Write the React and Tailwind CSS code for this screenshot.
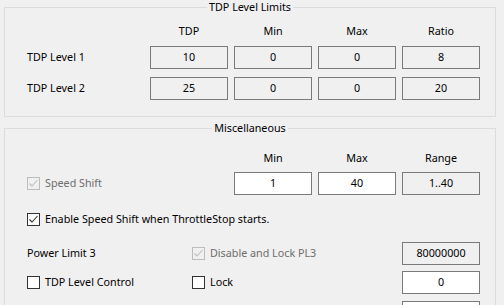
import React from "react";

const Check = ({ color }) => (
  <svg width="11" height="11" viewBox="0 0 11 11" className="block">
    <path d="M1.5 5.5 L4 8 L9.5 2" fill="none" stroke={color} strokeWidth="1.1" />
  </svg>
);

const CheckBox = ({ label, checked = false, disabled = false }) => (
  <label className="flex items-center gap-[5px]">
    <span
      className={`flex h-[13px] w-[13px] items-center justify-center border ${
        disabled ? "border-[#bcbcbc] bg-[#f0f0f0]" : "border-[#333333] bg-white"
      }`}
    >
      {checked && <Check color={disabled ? "#bcbcbc" : "#333333"} />}
    </span>
    <span className={disabled ? "text-[#6d6d6d]" : "text-black"}>{label}</span>
  </label>
);

const Field = ({ value, readOnly = true }) => (
  <div
    className={`h-[23px] w-[78px] shrink-0 border border-[#7a7a7a] text-center leading-[21px] ${
      readOnly ? "bg-[#f0f0f0]" : "bg-white"
    }`}
  >
    {value}
  </div>
);

const cols = "grid grid-cols-[117px_78px_78px_78px_78px] gap-x-[6px] items-center";

const tdpRows = [
  { name: "TDP Level 1", values: ["10", "0", "0", "8"] },
  { name: "TDP Level 2", values: ["25", "0", "0", "20"] },
];

export default function App() {
  return (
    <div
      className="h-[305px] w-[504px] overflow-hidden bg-[#f0f0f0] pt-[1px] text-[10.75px] text-black"
      style={{ fontFamily: '"Noto Sans", sans-serif' }}
    >
      <fieldset className="m-0 ml-[4px] h-[116px] w-[492px] border border-[#dcdcdc] p-0">
        <legend className="mx-auto px-[2px] leading-[13px]">TDP Level Limits</legend>
        <div className="pl-[22px] pt-[9px]">
          <div className={`${cols} leading-[16px]`}>
            <span />
            <span className="text-center">TDP</span>
            <span className="text-center">Min</span>
            <span className="text-center">Max</span>
            <span className="text-center">Ratio</span>
          </div>
          <div className="mt-[7px] flex flex-col gap-[8px]">
            {tdpRows.map((row) => (
              <div key={row.name} className={cols}>
                <span>{row.name}</span>
                {row.values.map((v, i) => (
                  <Field key={i} value={v} />
                ))}
              </div>
            ))}
          </div>
        </div>
      </fieldset>

      <fieldset className="m-0 ml-[4px] mt-[5px] h-[200px] w-[492px] border border-[#dcdcdc] p-0">
        <legend className="mx-auto px-[2px] leading-[13px]">Miscellaneous</legend>
        <div className="pl-[22px] pt-[15px]">
          <div className={`${cols} leading-[16px]`}>
            <span />
            <span />
            <span className="text-center">Min</span>
            <span className="text-center">Max</span>
            <span className="text-center">Range</span>
          </div>
          <div className={`${cols} mt-[6px]`}>
            <div className="col-span-2">
              <CheckBox label="Speed Shift" checked disabled />
            </div>
            <Field value="1" readOnly={false} />
            <Field value="40" readOnly={false} />
            <Field value="1..40" />
          </div>
          <div className="mt-[16px] leading-[16px]">
            <CheckBox label="Enable Speed Shift when ThrottleStop starts." checked />
          </div>
          <div className="mt-[15px] flex items-center">
            <span className="w-[165px]">Power Limit 3</span>
            <div className="w-[210px]">
              <CheckBox label="Disable and Lock PL3" checked disabled />
            </div>
            <Field value="80000000" />
          </div>
          <div className="mt-[6px] flex items-center">
            <div className="w-[165px]">
              <CheckBox label="TDP Level Control" />
            </div>
            <div className="w-[210px]">
              <CheckBox label="Lock" />
            </div>
            <Field value="0" readOnly={false} />
          </div>
          <div className="mt-[7px] flex items-center">
            <div className="w-[375px]" />
            <Field value="" readOnly={false} />
          </div>
        </div>
      </fieldset>
    </div>
  );
}
